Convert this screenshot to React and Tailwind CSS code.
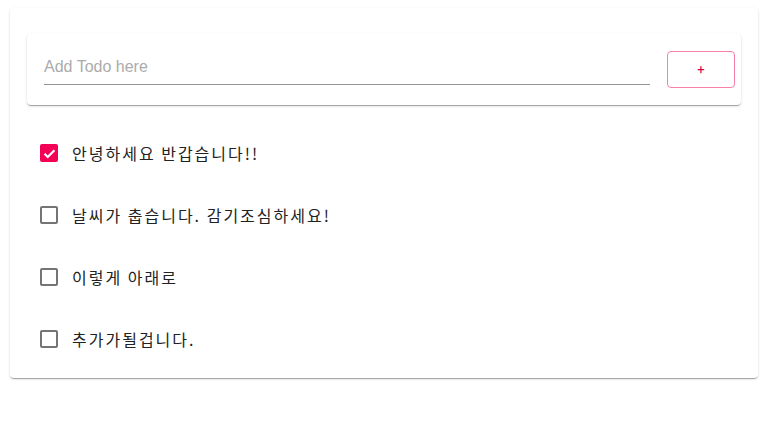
import { useState } from 'react';

const paperShadow =
  'shadow-[0_2px_1px_-1px_rgba(0,0,0,0.2),0_1px_1px_0_rgba(0,0,0,0.14),0_1px_3px_0_rgba(0,0,0,0.12)]';

function CheckBox({ checked, onChange }) {
  return (
    <button
      onClick={onChange}
      className="w-[18px] h-[18px] flex items-center justify-center shrink-0"
    >
      {checked ? (
        <span className="w-[18px] h-[18px] rounded-[2px] bg-[#f50057] flex items-center justify-center">
          <svg viewBox="0 0 24 24" className="w-[17px] h-[17px]" fill="none">
            <path d="M5 12.5l4.5 4.5L19 7.5" stroke="white" strokeWidth="3" />
          </svg>
        </span>
      ) : (
        <span className="w-[18px] h-[18px] rounded-[2px] border-2 border-[#757575]" />
      )}
    </button>
  );
}

export default function App() {
  const [todos, setTodos] = useState([
    { id: 1, text: '안녕하세요 반갑습니다!!', done: true },
    { id: 2, text: '날씨가 춥습니다. 감기조심하세요!', done: false },
    { id: 3, text: '이렇게 아래로', done: false },
    { id: 4, text: '추가가될겁니다.', done: false },
  ]);
  const [value, setValue] = useState('');

  const toggle = (id) =>
    setTodos(todos.map((t) => (t.id === id ? { ...t, done: !t.done } : t)));

  const addTodo = () => {
    if (!value.trim()) return;
    setTodos([...todos, { id: Date.now(), text: value, done: false }]);
    setValue('');
  };

  return (
    <div className="min-h-[442px] bg-white pt-[8px] pl-[10px] font-['Noto_Sans_CJK_KR',sans-serif]">
      {/* Outer paper */}
      <div className={`w-[748px] bg-white rounded-[4px] ${paperShadow} px-[17px] pt-[26px] pb-[8px]`}>
        {/* Input card */}
        <div className={`h-[71px] bg-white rounded-[4px] ${paperShadow} flex items-center pl-[17px] pr-[6px]`}>
          <div className="flex-1 h-[34px] mb-[3px] flex items-end border-b border-[#949494]">
            <input
              value={value}
              onChange={(e) => setValue(e.target.value)}
              placeholder="Add Todo here"
              className="w-full bg-transparent outline-none text-[16px] leading-[20px] pb-[7px] text-[#222] placeholder:text-[#ababab] font-['Liberation_Sans',sans-serif]"
            />
          </div>
          <button
            onClick={addTodo}
            className="ml-[17px] w-[68px] h-[37px] rounded-[4px] border border-[#f77fa9] text-[#d6004c] text-[13px] font-['Roboto','Liberation_Sans',sans-serif] flex items-center justify-center"
          >
            +
          </button>
        </div>

        {/* Todo list */}
        <ul className="mt-[17px]">
          {todos.map((todo) => (
            <li key={todo.id} className="h-[62px] flex items-center pl-[13px]">
              <CheckBox checked={todo.done} onChange={() => toggle(todo.id)} />
              <span className="ml-[14px] text-[16px] tracking-[2px] text-[#222]">{todo.text}</span>
            </li>
          ))}
        </ul>
      </div>
    </div>
  );
}
